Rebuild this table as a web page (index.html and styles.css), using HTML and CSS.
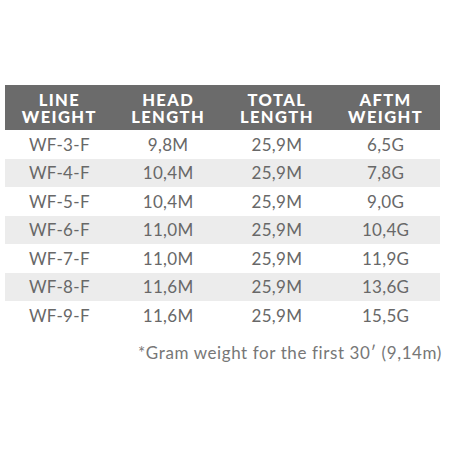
FILE: index.html
```html
<!DOCTYPE html>
<html>
<head>
<meta charset="utf-8">
<link rel="stylesheet" href="styles.css">
</head>
<body>
<div class="wrap">
  <table class="spec">
    <thead>
      <tr><th>LINE<br>WEIGHT</th><th>HEAD<br>LENGTH</th><th>TOTAL<br>LENGTH</th><th>AFTM<br>WEIGHT</th></tr>
    </thead>
    <tbody>
      <tr><td>WF-3-F</td><td>9,8M</td><td>25,9M</td><td>6,5G</td></tr>
      <tr class="alt"><td>WF-4-F</td><td>10,4M</td><td>25,9M</td><td>7,8G</td></tr>
      <tr><td>WF-5-F</td><td>10,4M</td><td>25,9M</td><td>9,0G</td></tr>
      <tr class="alt"><td>WF-6-F</td><td>11,0M</td><td>25,9M</td><td>10,4G</td></tr>
      <tr><td>WF-7-F</td><td>11,0M</td><td>25,9M</td><td>11,9G</td></tr>
      <tr class="alt"><td>WF-8-F</td><td>11,6M</td><td>25,9M</td><td>13,6G</td></tr>
      <tr><td>WF-9-F</td><td>11,6M</td><td>25,9M</td><td>15,5G</td></tr>
    </tbody>
  </table>
  <p class="note">*Gram weight for the first 30′ (9,14m)</p>
</div>
</body>
</html>
```

FILE: styles.css
```css
html, body {
  margin: 0;
  padding: 0;
  background: #ffffff;
}
.wrap {
  padding: 85px 10px 0 5px;
  font-family: Lato, "Liberation Sans", sans-serif;
}
.spec {
  width: 435px;
  border-collapse: collapse;
  table-layout: fixed;
}
.spec th {
  background: #6b6b6b;
  color: #ffffff;
  font-weight: 900;
  font-size: 16.5px;
  line-height: 17px;
  letter-spacing: 1.4px;
  height: 45px;
  padding: 3px 0 0 0;
  box-sizing: border-box;
  text-align: center;
  vertical-align: middle;
}
.spec td {
  color: #686868;
  font-size: 17px;
  height: 28.5px;
  padding: 0;
  text-align: center;
  vertical-align: middle;
  letter-spacing: 0.3px;
}
.spec tr.alt td {
  background: #ececec;
}
.note {
  margin: 12px 0 0 0;
  text-align: right;
  color: #777777;
  font-size: 17px;
  letter-spacing: 0.6px;
}
```
